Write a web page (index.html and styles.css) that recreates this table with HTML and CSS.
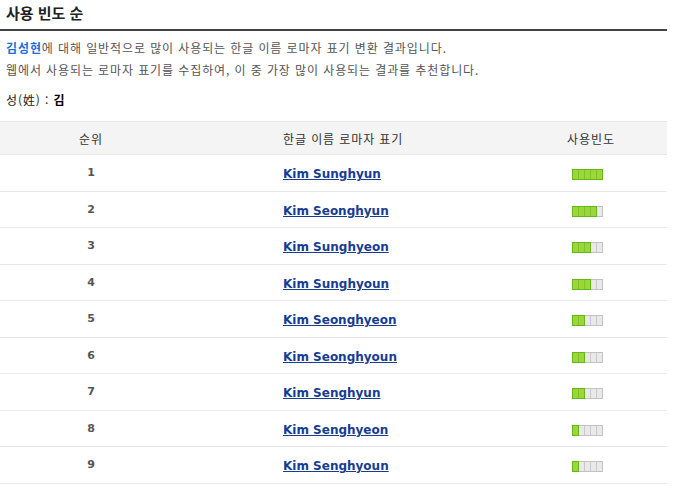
FILE: index.html
```html
<!DOCTYPE html>
<html lang="ko">

<head>
    <meta charset="UTF-8">
    <meta name="viewport" content="width=device-width, initial-scale=1.0">
    <title>사용 빈도 순</title>
    <link rel="stylesheet" href="styles.css">
</head>

<body>
    <div class="wrap">
        <h2 class="tit">사용 빈도 순</h2>
        <div class="desc">
            <p><strong class="hl">김성현</strong>에 대해 일반적으로 많이 사용되는 한글 이름 로마자 표기 변환 결과입니다.</p>
            <p>웹에서 사용되는 로마자 표기를 수집하여, 이 중 가장 많이 사용되는 결과를 추천합니다.</p>
        </div>
        <p class="surname">성(姓) : <b>김</b></p>

        <table class="rank">
            <thead>
                <tr>
                    <th class="c1">순위</th>
                    <th class="c2">한글 이름 로마자 표기</th>
                    <th class="c3">사용빈도</th>
                </tr>
            </thead>
            <tbody>
                <tr>
                    <td class="c1 num">1</td>
                    <td class="c2"><a href="#">Kim Sunghyun</a></td>
                    <td class="c3"><span class="bar"><span class="fill" style="width: 31px"></span></span></td>
                </tr>
                <tr>
                    <td class="c1 num">2</td>
                    <td class="c2"><a href="#">Kim Seonghyun</a></td>
                    <td class="c3"><span class="bar"><span class="fill" style="width: 25px"></span></span></td>
                </tr>
                <tr>
                    <td class="c1 num">3</td>
                    <td class="c2"><a href="#">Kim Sunghyeon</a></td>
                    <td class="c3"><span class="bar"><span class="fill" style="width: 19px"></span></span></td>
                </tr>
                <tr>
                    <td class="c1 num">4</td>
                    <td class="c2"><a href="#">Kim Sunghyoun</a></td>
                    <td class="c3"><span class="bar"><span class="fill" style="width: 19px"></span></span></td>
                </tr>
                <tr>
                    <td class="c1 num">5</td>
                    <td class="c2"><a href="#">Kim Seonghyeon</a></td>
                    <td class="c3"><span class="bar"><span class="fill" style="width: 13px"></span></span></td>
                </tr>
                <tr>
                    <td class="c1 num">6</td>
                    <td class="c2"><a href="#">Kim Seonghyoun</a></td>
                    <td class="c3"><span class="bar"><span class="fill" style="width: 13px"></span></span></td>
                </tr>
                <tr>
                    <td class="c1 num">7</td>
                    <td class="c2"><a href="#">Kim Senghyun</a></td>
                    <td class="c3"><span class="bar"><span class="fill" style="width: 13px"></span></span></td>
                </tr>
                <tr>
                    <td class="c1 num">8</td>
                    <td class="c2"><a href="#">Kim Senghyeon</a></td>
                    <td class="c3"><span class="bar"><span class="fill" style="width: 7px"></span></span></td>
                </tr>
                <tr>
                    <td class="c1 num">9</td>
                    <td class="c2"><a href="#">Kim Senghyoun</a></td>
                    <td class="c3"><span class="bar"><span class="fill" style="width: 7px"></span></span></td>
                </tr>
            </tbody>
        </table>
    </div>
</body>

</html>
```

FILE: styles.css
```css
* {
    margin: 0;
    padding: 0;
}
body {
    background-color: #fff;
    font-family: "Noto Sans CJK KR", "DejaVu Sans", sans-serif;
    font-size: 12px;
    letter-spacing: 0.9px;
    color: #555;
}
.wrap {
    width: 667px;
}
.tit {
    height: 29px;
    padding-left: 6px;
    font-size: 15px;
    line-height: 25px;
    letter-spacing: 0;
    color: #222;
    border-bottom: 2px solid #444;
}
.desc {
    padding: 6px 0 0 6px;
    line-height: 22px;
}
.hl {
    color: #1a6ed8;
}
.surname {
    margin-top: 9px;
    padding-left: 6px;
    line-height: 20px;
    color: #222;
}
.surname b {
    color: #000;
}

.rank {
    width: 667px;
    margin-top: 11px;
    border-collapse: collapse;
    border-top: 1px solid #e6e6e6;
}
.rank th {
    height: 32px;
    font-weight: normal;
    color: #333;
    background-color: #f4f4f4;
    border-bottom: 1px solid #e6e6e6;
}
.rank td {
    height: 35.5px;
    border-bottom: 1px solid #e8e8e8;
}
.c1 {
    width: 182px;
    text-align: center;
}
.c2 {
    width: 232px;
    padding-left: 101px !important;
    text-align: left;
}
.c3 {
    width: 152px;
    text-align: center;
}
.num {
    font-family: "DejaVu Sans", sans-serif;
    font-weight: bold;
    font-size: 11px;
    letter-spacing: 0;
    color: #555;
}
.rank a {
    font-family: "DejaVu Sans", sans-serif;
    font-size: 12px;
    font-weight: bold;
    letter-spacing: 0;
    color: #173c92;
}

.bar {
    position: relative;
    display: inline-block;
    width: 31px;
    height: 11px;
    margin-left: -8px;
    vertical-align: middle;
    box-sizing: border-box;
    border: 1px solid #c2c2c2;
    background: repeating-linear-gradient(to right, #e9e9e9 0 5px, #c9c9c9 5px 6px);
}
.fill {
    position: absolute;
    top: -1px;
    left: -1px;
    height: 11px;
    box-sizing: border-box;
    border: 1px solid #63b815;
    background: repeating-linear-gradient(to right, #9dd63a 0 5px, #78c626 5px 6px);
}
```
